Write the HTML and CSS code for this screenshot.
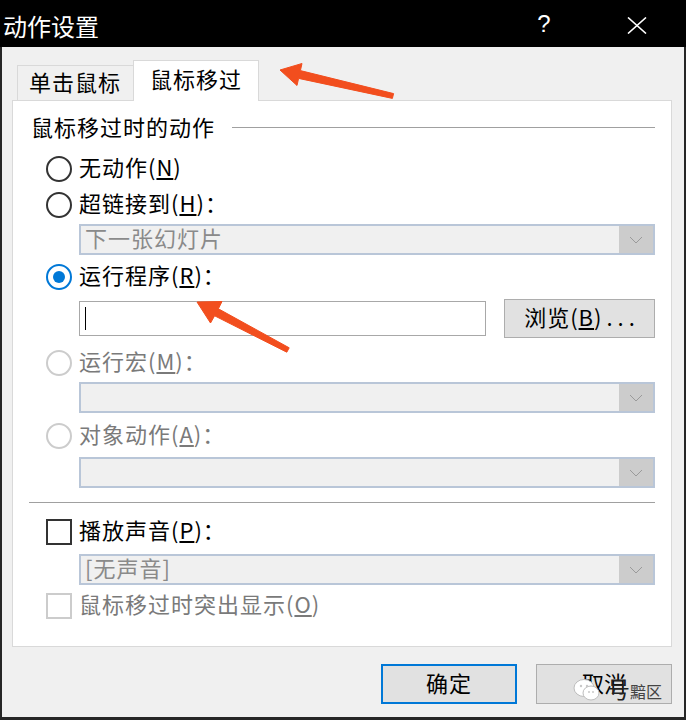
FILE: index.html
```html
<!DOCTYPE html>
<html lang="zh-CN">
<head>
<meta charset="utf-8">
<title>动作设置</title>
<link rel="stylesheet" href="styles.css">
</head>
<body>
<div class="window">
  <div class="titlebar">
    <span class="title">动作设置</span>
    <span class="spacer"></span>
    <span class="help">?</span>
    <svg class="close" width="20" height="17" viewBox="0 0 20 17"><path d="M1 0.5 L19 16.5 M19 0.5 L1 16.5" stroke="#fff" stroke-width="1.6" fill="none"/></svg>
  </div>
  <div class="client">
    <div class="tabs">
      <div class="tab">单击鼠标</div>
      <div class="tab active">鼠标移过</div>
    </div>
    <div class="panel">
      <div class="group-head"><span>鼠标移过时的动作</span><span class="rule"></span></div>

      <div class="opt o1"><span class="radio"></span><span class="label">无动作(<u>N</u>)</span></div>
      <div class="opt o2"><span class="radio"></span><span class="label">超链接到(<u>H</u>)：</span></div>
      <div class="combo c1"><span class="combo-text">下一张幻灯片</span><span class="combo-btn"><svg width="14" height="8" viewBox="0 0 14 8"><path d="M1 1 L7 7 L13 1" stroke="#9a9a9a" stroke-width="1" fill="none"/></svg></span></div>

      <div class="opt o3"><span class="radio checked"></span><span class="label">运行程序(<u>R</u>)：</span></div>
      <div class="input-row">
        <div class="textbox"><span class="caret"></span></div>
        <div class="btn browse">浏览(<u>B</u>)<span class="dots">...</span></div>
      </div>

      <div class="opt o4 disabled"><span class="radio"></span><span class="label">运行宏(<u>M</u>)：</span></div>
      <div class="combo c2"><span class="combo-text"></span><span class="combo-btn"><svg width="14" height="8" viewBox="0 0 14 8"><path d="M1 1 L7 7 L13 1" stroke="#9a9a9a" stroke-width="1" fill="none"/></svg></span></div>

      <div class="opt o5 disabled"><span class="radio"></span><span class="label">对象动作(<u>A</u>)：</span></div>
      <div class="combo c3"><span class="combo-text"></span><span class="combo-btn"><svg width="14" height="8" viewBox="0 0 14 8"><path d="M1 1 L7 7 L13 1" stroke="#9a9a9a" stroke-width="1" fill="none"/></svg></span></div>

      <div class="separator"></div>

      <div class="opt o6"><span class="check"></span><span class="label">播放声音(<u>P</u>)：</span></div>
      <div class="combo c4"><span class="combo-text">[无声音]</span><span class="combo-btn"><svg width="14" height="8" viewBox="0 0 14 8"><path d="M1 1 L7 7 L13 1" stroke="#9a9a9a" stroke-width="1" fill="none"/></svg></span></div>
      <div class="opt o7 disabled"><span class="check"></span><span class="label">鼠标移过时突出显示(<u>O</u>)</span></div>
    </div>
    <div class="buttons">
      <div class="btn ok">确定</div>
      <div class="btn cancel">取消
        <span class="watermark">
          <svg width="28" height="24" viewBox="0 0 28 24"><ellipse cx="11" cy="10" rx="10" ry="8.5" fill="#fff" stroke="#bdbdbd" stroke-width="1"/><ellipse cx="18" cy="15" rx="8" ry="7" fill="#fff" stroke="#bdbdbd" stroke-width="1"/><circle cx="8" cy="8" r="1.2" fill="#c8c8c8"/><circle cx="14" cy="8" r="1.2" fill="#c8c8c8"/><circle cx="16" cy="14" r="1" fill="#c8c8c8"/><circle cx="20" cy="14" r="1" fill="#c8c8c8"/></svg>
          <span class="wm-big">号</span><span class="wm-small">黯区</span>
        </span>
      </div>
    </div>
  </div>
  <svg class="arrows" width="686" height="720" viewBox="0 0 686 720">
    <polygon points="280,70 302,63.5 300.4,70.6 393.6,93.6 392.4,98.4 298.6,78.4 297,85.5" fill="#f24e1e" stroke="#f24e1e" stroke-width="1" stroke-linejoin="round"/>
    <polygon points="197,302 222,301.5 218.4,308.8 289.2,347.8 286.8,352.2 214.6,315.8 210.5,323" fill="#f24e1e" stroke="#f24e1e" stroke-width="1" stroke-linejoin="round"/>
  </svg>
</div>
</body>
</html>
```

FILE: styles.css
```css
html, body {
  margin: 0;
  padding: 0;
}
body {
  background: #262626;
  font-family: "Noto Sans CJK SC", "Noto Sans", sans-serif;
}
.window {
  position: relative;
  width: 686px;
  height: 720px;
  background: #262626;
  overflow: hidden;
}
.titlebar {
  height: 47px;
  background: #000;
  display: flex;
  align-items: center;
  color: #fff;
  padding-right: 39px;
  box-sizing: border-box;
}
.title {
  margin-left: 3px;
  margin-top: 4px;
  font-size: 24px;
  line-height: 1;
}
.spacer { flex: 1; }
.help {
  width: 20px;
  text-align: center;
  font-family: "Liberation Sans", sans-serif;
  font-size: 24px;
  line-height: 1;
  margin-right: 73px;
  margin-top: 1px;
}
.close {
  display: block;
  margin-top: 3px;
}
.client {
  margin: 0 2px;
  height: 670px;
  background: #f0f0f0;
  overflow: hidden;
  font-size: 22px;
  letter-spacing: 1px;
  color: #000;
}
.tabs {
  display: flex;
  align-items: flex-end;
  margin-top: 13px;
  margin-left: 15px;
  height: 40px;
  position: relative;
  z-index: 1;
}
.tab {
  box-sizing: border-box;
  height: 35px;
  width: 116px;
  border: 1px solid #d9d9d9;
  border-right: none;
  border-bottom: none;
  padding-left: 11px;
  line-height: 31px;
  background: #f0f0f0;
}
.tab.active {
  height: 41px;
  width: 126px;
  margin-bottom: -1px;
  background: #fff;
  border-right: 1px solid #d9d9d9;
  padding-left: 16px;
  line-height: 35px;
}
.panel {
  margin-left: 10px;
  width: 660px;
  box-sizing: border-box;
  background: #fff;
  border: 1px solid #d9d9d9;
  padding: 13px 16px 22px 17px;
}
.group-head {
  height: 28px;
  display: flex;
  align-items: center;
  line-height: 1.2;
}
.group-head span:first-child {
  margin-left: 1px;
  margin-top: -3px;
}
.rule {
  flex: 1;
  height: 1px;
  background: #a0a0a0;
  margin-left: 17px;
  margin-top: -2px;
}
.opt {
  height: 36px;
  display: flex;
  align-items: center;
  padding-left: 16px;
  line-height: 1.2;
}
.label {
  margin-left: 7px;
  margin-top: -5px;
}
.radio {
  width: 26px;
  height: 26px;
  box-sizing: border-box;
  border: 2px solid #333;
  border-radius: 50%;
  position: relative;
  flex: none;
}
.radio.checked {
  border-color: #0078d7;
}
.radio.checked::after {
  content: "";
  position: absolute;
  left: 5px;
  top: 5px;
  width: 12px;
  height: 12px;
  border-radius: 50%;
  background: #0078d7;
}
.check {
  width: 26px;
  height: 26px;
  box-sizing: border-box;
  border: 2px solid #333;
  flex: none;
}
.disabled { color: #7a7a7a; }
.disabled .radio, .disabled .check { border-color: #cccccc; }

.o1 { margin-top: 9px; }
.c1 { margin-top: 1px; }
.o3 { margin-top: 4px; }
.input-row { margin-top: 4px; }
.o4 { margin-top: 7px; }
.c2 { margin-top: 1px; }
.o5 { margin-top: 5px; }
.c3 { margin-top: 3px; }
.separator { margin-top: 14px; }
.o6 { margin-top: 11px; }
.c4 { margin-top: 4px; }
.o7 { margin-top: 3px; }

.combo {
  margin-left: 49px;
  width: 576px;
  height: 31px;
  box-sizing: border-box;
  border: 2px solid #b9c6d8;
  background: #f0f0f0;
  display: flex;
  align-items: stretch;
}
.combo-text {
  flex: 1;
  padding-left: 4px;
  color: #8a8a8a;
  line-height: 23px;
}
.combo-btn {
  width: 34px;
  background: #cccccc;
  display: flex;
  align-items: center;
  justify-content: center;
}
.combo-btn svg { display: block; }

.input-row {
  margin-left: 49px;
  height: 39px;
  display: flex;
  align-items: center;
}
.textbox {
  width: 407px;
  height: 35px;
  box-sizing: border-box;
  border: 1px solid #a8a8a8;
  background: #fff;
  display: flex;
  align-items: center;
}
.caret {
  width: 1px;
  height: 23px;
  background: #000;
  margin-left: 5px;
}
.btn {
  box-sizing: border-box;
  background: #e1e1e1;
  border: 1px solid #adadad;
  display: flex;
  align-items: center;
  justify-content: center;
  line-height: 1.2;
}
.browse {
  margin-left: 18px;
  width: 151px;
  height: 39px;
  padding-bottom: 4px;
}
.dots {
  letter-spacing: 5px;
  margin-left: 4px;
  margin-right: -5px;
}
.separator {
  height: 1px;
  background: #a0a0a0;
  margin-left: -1px;
}
.buttons {
  display: flex;
  justify-content: flex-end;
  gap: 19px;
  padding-right: 12px;
  margin-top: 17px;
}
.buttons .btn {
  width: 136px;
  height: 40px;
  padding-bottom: 4px;
}
.ok {
  border: 2px solid #0078d7 !important;
}
.cancel {
  position: relative;
  letter-spacing: 0;
}
.watermark {
  position: absolute;
  left: 36px;
  top: 9px;
  display: flex;
  align-items: center;
  pointer-events: none;
}
.watermark svg {
  display: block;
  margin-top: 4px;
}
.wm-big {
  margin-left: 6px;
  font-size: 23px;
  color: #222;
  line-height: 1;
}
.wm-small {
  font-size: 16px;
  color: #444;
  line-height: 1;
  margin-top: 5px;
}
.arrows {
  position: absolute;
  left: 0;
  top: 0;
  pointer-events: none;
}
```
